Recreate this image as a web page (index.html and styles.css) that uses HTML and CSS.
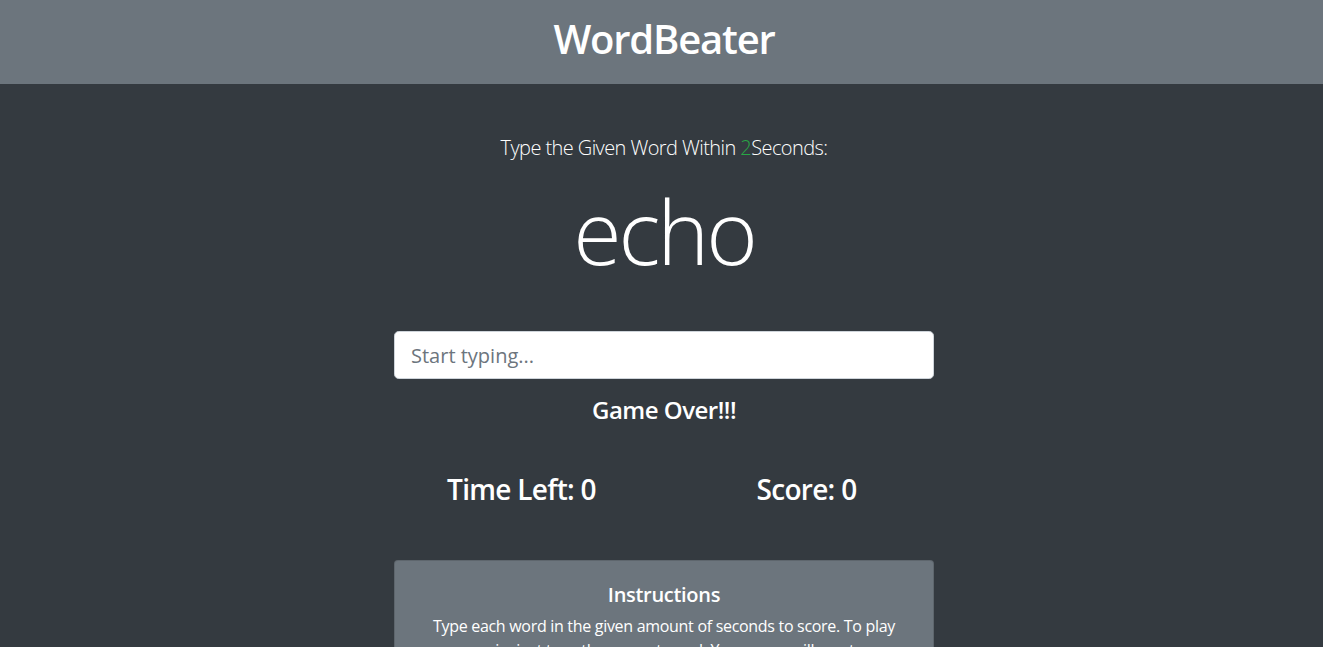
FILE: index.html
```html
<!DOCTYPE html>
<html lang="en">
<head>
<meta charset="utf-8">
<title>WordBeater</title>
<link rel="stylesheet" href="styles.css">
</head>
<body>
<header class="site-header">
  <h1 class="brand">WordBeater</h1>
</header>
<main class="container">
  <div class="column">
    <p class="lead">Type the Given Word Within <span class="text-success">2</span>Seconds:</p>
    <h2 class="current-word">echo</h2>
    <input type="text" class="word-input" placeholder="Start typing...">
    <h4 class="message">Game Over!!!</h4>
    <div class="stats">
      <h3 class="stat">Time Left: <span>0</span></h3>
      <h3 class="stat">Score: <span>0</span></h3>
    </div>
    <div class="card">
      <h5 class="card-title">Instructions</h5>
      <p class="card-text">Type each word in the given amount of seconds to score. To play again, just type the current word. Your score will reset.</p>
    </div>
  </div>
</main>
</body>
</html>
```

FILE: styles.css
```css
* { box-sizing: border-box; }
html, body { margin: 0; padding: 0; }
body {
  background: #343a40;
  color: #fff;
  font-family: "Open Sans", "Noto Sans", "Liberation Sans", sans-serif;
  font-size: 16px;
  line-height: 1.5;
  min-height: 647px;
}
.site-header {
  background: #6c757d;
  height: 84px;
  display: flex;
  align-items: center;
  justify-content: center;
  padding: 0 0 7px 5px;
}
.brand {
  margin: 0;
  font-size: 40px;
  font-weight: 600;
  line-height: 1.2;
  letter-spacing: -1.2px;
}
.container {
  display: flex;
  justify-content: center;
  text-align: center;
  padding-left: 5px;
}
.column {
  width: 540px;
  padding-top: 48px;
}
.lead {
  margin: 0 0 16px;
  font-size: 20px;
  font-weight: 300;
  line-height: 32px;
  letter-spacing: -0.58px;
}
.text-success { color: #28a745; }
.current-word {
  margin: 0 0 48px;
  font-size: 88px;
  font-weight: 300;
  line-height: 103px;
  letter-spacing: -3px;
}
.word-input {
  display: block;
  width: 100%;
  height: 48px;
  padding: 8px 16px;
  font-family: inherit;
  font-size: 20px;
  line-height: 1.5;
  color: #495057;
  background: #fff;
  border: 1px solid #ced4da;
  border-radius: 4.8px;
  outline: none;
}
.word-input::placeholder { color: #6c757d; opacity: 1; }
.message {
  margin: 16px 0 0;
  font-size: 24px;
  font-weight: 600;
  line-height: 29px;
  letter-spacing: -0.5px;
}
.stats {
  display: grid;
  grid-template-columns: 1fr 1fr;
  column-gap: 30px;
  margin-top: 48px;
}
.stat {
  margin: 0;
  font-size: 28px;
  font-weight: 600;
  line-height: 34px;
  letter-spacing: -0.7px;
}
.card {
  margin-top: 54px;
  background: #6c757d;
  border: 1px solid rgba(0,0,0,0.125);
  border-radius: 4px;
  padding: 22px 20px 20px;
}
.card-title {
  margin: 0 0 7px;
  font-size: 20px;
  font-weight: 600;
  line-height: 24px;
  letter-spacing: -0.3px;
}
.card-text {
  margin: 0;
  font-size: 16px;
  line-height: 24px;
  letter-spacing: -0.3px;
}
```
